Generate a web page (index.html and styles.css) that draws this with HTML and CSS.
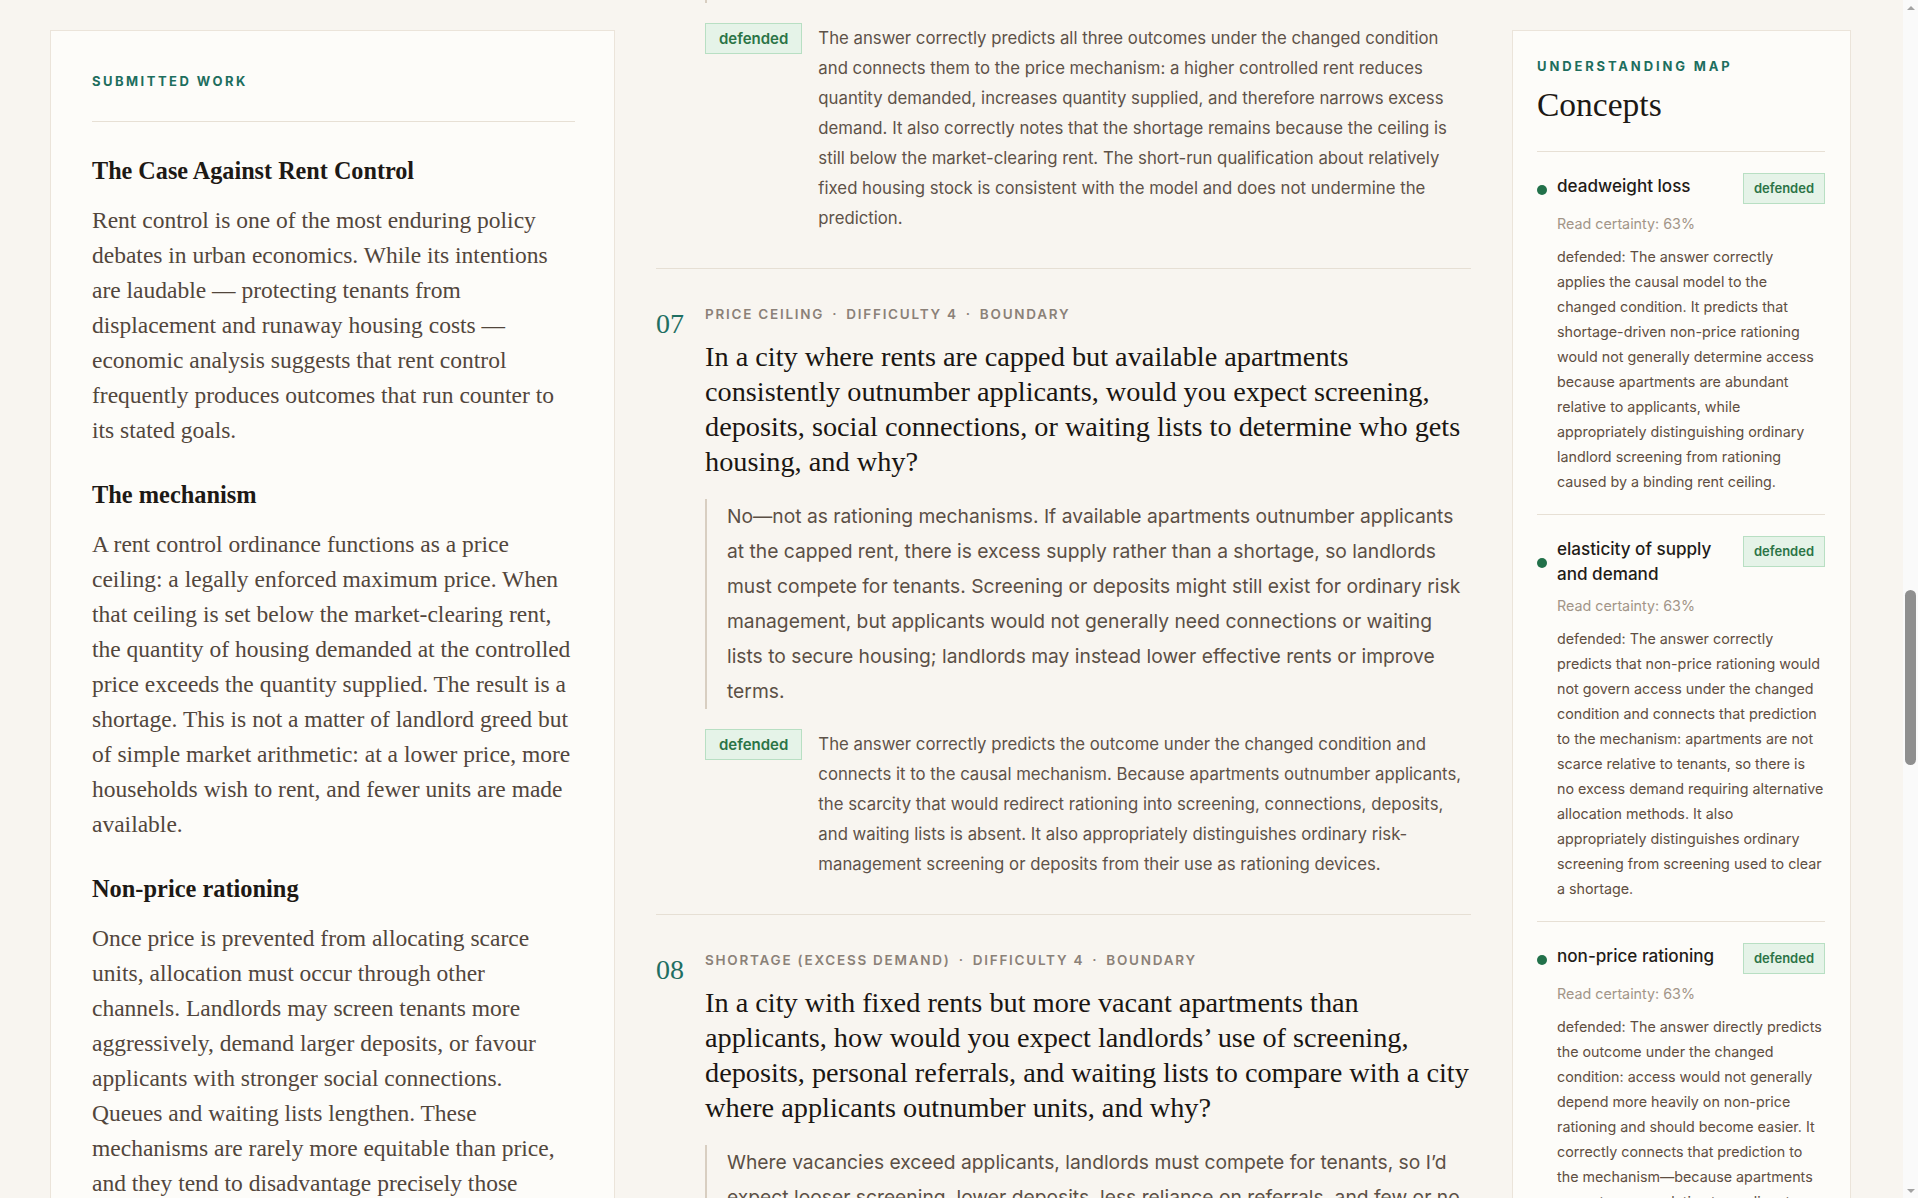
FILE: index.html
```html
<!DOCTYPE html>
<html lang="en">
<head>
    <meta charset="UTF-8">
    <meta name="viewport" content="width=device-width, initial-scale=1.0">
    <title>Review — The Case Against Rent Control</title>
    <link rel="stylesheet" href="styles.css">
</head>
<body>
    <div class="shell">
    <div class="app" id="app">
    <div class="layout">

        <!-- Submitted essay, kept in view while scrolling the questions -->
        <aside class="panel submission">
            <div class="panel-label submission-label">Submitted work</div>
            <article class="essay">
                <h2>The Case Against Rent Control</h2>
                <p>Rent control is one of the most enduring policy debates in urban economics. While its intentions are laudable — protecting tenants from displacement and runaway housing costs — economic analysis suggests that rent control frequently produces outcomes that run counter to its stated goals.</p>

                <h3>The mechanism</h3>
                <p>A rent control ordinance functions as a price ceiling: a legally enforced maximum price. When that ceiling is set below the market-clearing rent, the quantity of housing demanded at the controlled price exceeds the quantity supplied. The result is a shortage. This is not a matter of landlord greed but of simple market arithmetic: at a lower price, more households wish to rent, and fewer units are made available.</p>

                <h3>Non-price rationing</h3>
                <p>Once price is prevented from allocating scarce units, allocation must occur through other channels. Landlords may screen tenants more aggressively, demand larger deposits, or favour applicants with stronger social connections. Queues and waiting lists lengthen. These mechanisms are rarely more equitable than price, and they tend to disadvantage precisely those households that rent control was meant to protect: newcomers, younger renters, and people without savings or references.</p>

                <h3>The long run</h3>
                <p>Because the controlled rent caps the return on rental housing, owners have less reason to maintain existing units or to build new ones. Some convert apartments to condominiums or take them off the market entirely. Over time the rental stock shrinks and ages, deepening the very shortage the ceiling created.</p>

                <h3>Conclusion</h3>
                <p>Rent control helps the tenants who already hold controlled leases, but it does so at the expense of those still searching, and of the housing stock itself. Policies that expand supply or support low-income renters directly are more likely to achieve what rent control promises.</p>
            </article>
        </aside>

        <main class="questions" id="questions">
            <header class="review-head">
                <div class="panel-label">Comprehension check</div>
                <h1>Does the essay’s causal model hold up?</h1>
                <p>Twelve questions move the conditions of the essay’s argument and ask what should happen next. Each answer is read against the model and marked defended, partial or not yet shown. Boundary questions push the model to the edge of where it applies.</p>
                <div class="review-stats">
                    <div class="stat"><span class="stat-value">12</span><span class="stat-label">Questions</span></div>
                    <div class="stat"><span class="stat-value">12</span><span class="stat-label">Defended</span></div>
                    <div class="stat"><span class="stat-value">0</span><span class="stat-label">Partial</span></div>
                    <div class="stat"><span class="stat-value">5</span><span class="stat-label">Concepts</span></div>
                </div>
            </header>
            <!-- Questions are appended from the data below -->
        </main>

        <!-- Concept map for the whole review -->
        <aside class="panel concepts">
            <div class="panel-label">Understanding map</div>
            <h2 class="concepts-title">Concepts</h2>
            <ul class="concept-list">
                <li class="concept">
                    <div class="concept-head">
                        <span class="concept-dot"></span>
                        <span class="concept-name">deadweight loss</span>
                        <span class="badge badge-sm">defended</span>
                    </div>
                    <div class="concept-certainty">Read certainty: 63%</div>
                    <p class="concept-note">defended: The answer correctly applies the causal model to the changed condition. It predicts that shortage-driven non-price rationing would not generally determine access because apartments are abundant relative to applicants, while appropriately distinguishing ordinary landlord screening from rationing caused by a binding rent ceiling.</p>
                </li>
                <li class="concept">
                    <div class="concept-head">
                        <span class="concept-dot"></span>
                        <span class="concept-name">elasticity of supply and demand</span>
                        <span class="badge badge-sm">defended</span>
                    </div>
                    <div class="concept-certainty">Read certainty: 63%</div>
                    <p class="concept-note">defended: The answer correctly predicts that non-price rationing would not govern access under the changed condition and connects that prediction to the mechanism: apartments are not scarce relative to tenants, so there is no excess demand requiring alternative allocation methods. It also appropriately distinguishes ordinary screening from screening used to clear a shortage.</p>
                </li>
                <li class="concept">
                    <div class="concept-head">
                        <span class="concept-dot"></span>
                        <span class="concept-name">non-price rationing</span>
                        <span class="badge badge-sm">defended</span>
                    </div>
                    <div class="concept-certainty">Read certainty: 63%</div>
                    <p class="concept-note">defended: The answer directly predicts the outcome under the changed condition: access would not generally depend more heavily on non-price rationing and should become easier. It correctly connects that prediction to the mechanism—because apartments are not scarce relative to applicants, landlords have no surplus of tenants to ration among.</p>
                </li>
                <li class="concept">
                    <div class="concept-head">
                        <span class="concept-dot"></span>
                        <span class="concept-name">price ceiling</span>
                        <span class="badge badge-sm">defended</span>
                    </div>
                    <div class="concept-certainty">Read certainty: 71%</div>
                    <p class="concept-note">defended: The answer correctly predicts that raising the ceiling while keeping it below the market-clearing rent narrows but does not remove the shortage, and ties each change to movements along the supply and demand curves.</p>
                </li>
                <li class="concept">
                    <div class="concept-head">
                        <span class="concept-dot"></span>
                        <span class="concept-name">shortage (excess demand)</span>
                        <span class="badge badge-sm">defended</span>
                    </div>
                    <div class="concept-certainty">Read certainty: 68%</div>
                    <p class="concept-note">defended: The answer correctly compares allocation in a market with excess demand and one with excess supply, and explains that screening and queues respond to the shortage rather than to the ceiling itself.</p>
                </li>
            </ul>
        </aside>
    </div>
    </div>

    <!-- Slim scroll rail for the review pane -->
    <div class="scroll-track">
        <span class="scroll-arrow up"></span>
        <div class="scroll-rail" id="scrollRail">
            <div class="scroll-thumb" id="scrollThumb"></div>
        </div>
        <span class="scroll-arrow down"></span>
    </div>
    </div>

    <script>
        const questions = [
            {
                num: '01', topic: 'Price ceiling', difficulty: 2, kind: 'Core',
                question: 'A city caps monthly rent for one-bedroom apartments below the rent at which the market would otherwise clear. What happens to the quantity of apartments demanded and supplied?',
                answer: 'At the capped rent more households want to rent, so quantity demanded rises, while fewer units are offered because renting them out pays less, so quantity supplied falls. The gap between the two is a shortage of apartments. Landlords who stay in the market also have less reason to add units, so the shortage can grow over time even if demand does not change.',
                verdict: 'defended',
                feedback: 'The answer correctly identifies a movement along both curves rather than a shift of either, and names the resulting gap as a shortage. It ties each change to the incentive facing renters and landlords instead of restating the definition of a price ceiling. The explanation also anticipates the longer-run supply response without confusing it with the immediate effect, and keeps the distinction between quantity demanded and demand clear throughout.'
            },
            {
                num: '02', topic: 'Shortage (excess demand)', difficulty: 2, kind: 'Core',
                question: 'Why does a binding rent ceiling produce a persistent shortage instead of simply making housing cheaper for everyone who wants it?',
                answer: 'Because the ceiling stops the rent from rising to the level where quantity demanded equals quantity supplied. Normally a shortage pushes prices up until it disappears, but the legal maximum blocks that adjustment, so the excess demand stays in place for as long as the ceiling binds. People who already hold leases benefit, but those still searching face longer queues and must compete in ways that do not show up in the rent.',
                verdict: 'defended',
                feedback: 'The answer correctly explains that the shortage persists because the adjustment mechanism is suppressed, not because demand is unusually high. It distinguishes a lower price for those who find a unit from lower costs for everyone who is searching. It also recognises that the benefit of the lower rent is unevenly spread, which sets up the later questions about how access is decided when price cannot do it.'
            },
            {
                num: '03', topic: 'Non-price rationing', difficulty: 3, kind: 'Transfer',
                question: 'Under a binding rent ceiling, landlords receive far more applications than they have units. What criteria would you expect them to use to choose tenants, and who is likely to lose out?',
                answer: 'Since they cannot charge more, landlords will choose using other things: credit checks, references, larger deposits, referrals from people they know, or simply whoever applied first. Newcomers, younger renters and people without savings or connections are the most likely to be shut out. Because each of these criteria costs applicants time, money or social capital, the true cost of getting an apartment ends up higher than the controlled rent suggests.',
                verdict: 'defended',
                feedback: 'The answer correctly predicts that allocation shifts from price to screening, deposits, connections, and queues, and identifies the groups that these devices tend to exclude. It connects the change directly to the excess demand created by the ceiling. The point about the hidden cost of access is a good extension: rationing by other means still imposes a price, only one paid in effort, delay and connections instead of rent.'
            },
            {
                num: '04', topic: 'Deadweight loss', difficulty: 3, kind: 'Core',
                question: 'Rent control transfers some surplus from landlords to tenants. Why does economic analysis also predict a loss of total surplus, and where does that loss come from?',
                answer: 'Fewer apartments are rented than at the market-clearing rent. For the units that are no longer supplied, some renters valued them above what it would have cost to provide them, so mutually beneficial rentals never happen. That lost surplus is the deadweight loss, separate from the transfer. Some of what landlords lose becomes a gain for tenants, but the value of the apartments that are never rented is lost to everyone.',
                verdict: 'defended',
                feedback: 'The answer correctly separates the transfer of surplus from the net loss and locates the deadweight loss in the units that are no longer traded. It explains the loss in terms of trades that would have benefited both sides rather than as a fall in landlord income. It could note that non-price rationing adds to the loss when units go to renters who value them less, but the core reasoning is sound.'
            },
            {
                num: '05', topic: 'Elasticity of supply and demand', difficulty: 3, kind: 'Transfer',
                question: 'Would you expect the shortage caused by a rent ceiling to be larger one year after it is introduced or ten years after, and why?',
                answer: 'Larger after ten years. In the short run the housing stock is mostly fixed, so supply barely responds. Over time owners convert units, defer maintenance and build less, and more people move to the city looking for cheap rent, so both supply and demand become more elastic and the gap widens. In the first year the shortage mainly reflects demand, while later it also reflects the units that were never built.',
                verdict: 'defended',
                feedback: 'The answer correctly predicts a growing shortage and connects it to the difference between short-run and long-run elasticity on both sides of the market. It recognises that the same ceiling produces a larger gap as supply and demand become more responsive. The distinction between the first-year gap and the later gap, which also reflects units never built, is clearly drawn and matches the causal model in the essay.'
            },
            {
                num: '06', topic: 'Price ceiling', difficulty: 4, kind: 'Boundary',
                question: 'Suppose the city raises the rent ceiling but leaves it below the market-clearing rent. What would you expect to happen to quantity demanded, quantity supplied, and the shortage?',
                answer: 'A higher controlled rent means slightly fewer households want to rent and landlords are willing to offer a few more units, so the shortage narrows. It does not disappear, because the ceiling is still below the market-clearing rent. In the short run supply might barely move, since the housing stock is relatively fixed. Over several years the higher ceiling would let supply respond more, so the gap would keep closing slowly.',
                verdict: 'defended',
                feedback: 'The answer correctly predicts all three outcomes under the changed condition and connects them to the price mechanism: a higher controlled rent reduces quantity demanded, increases quantity supplied, and therefore narrows excess demand. It also correctly notes that the shortage remains because the ceiling is still below the market-clearing rent. The short-run qualification about relatively fixed housing stock is consistent with the model and does not undermine the prediction.'
            },
            {
                num: '07', topic: 'Price ceiling', difficulty: 4, kind: 'Boundary',
                question: 'In a city where rents are capped but available apartments consistently outnumber applicants, would you expect screening, deposits, social connections, or waiting lists to determine who gets housing, and why?',
                answer: 'No—not as rationing mechanisms. If available apartments outnumber applicants at the capped rent, there is excess supply rather than a shortage, so landlords must compete for tenants. Screening or deposits might still exist for ordinary risk management, but applicants would not generally need connections or waiting lists to secure housing; landlords may instead lower effective rents or improve terms.',
                verdict: 'defended',
                feedback: 'The answer correctly predicts the outcome under the changed condition and connects it to the causal mechanism. Because apartments outnumber applicants, the scarcity that would redirect rationing into screening, connections, deposits, and waiting lists is absent. It also appropriately distinguishes ordinary risk-management screening or deposits from their use as rationing devices.'
            },
            {
                num: '08', topic: 'Shortage (excess demand)', difficulty: 4, kind: 'Boundary',
                question: 'In a city with fixed rents but more vacant apartments than applicants, how would you expect landlords’ use of screening, deposits, personal referrals, and waiting lists to compare with a city where applicants outnumber units, and why?',
                answer: 'Where vacancies exceed applicants, landlords must compete for tenants, so I’d expect looser screening, lower deposits, less reliance on referrals, and few or no waiting lists. Where applicants outnumber units, the shortage lets landlords choose among many applicants, so those same devices become the way scarce apartments are allocated.',
                verdict: 'defended',
                feedback: 'The answer correctly predicts that screening, deposits, referrals, and waiting lists matter less where vacancies exceed applicants, and ties the comparison to whether excess demand exists. It recognises that these devices respond to the shortage rather than to the rent cap itself.'
            },
            {
                num: '09', topic: 'Deadweight loss', difficulty: 4, kind: 'Boundary',
                question: 'If the rent ceiling were set above the market-clearing rent, would it create any deadweight loss? Explain using the same reasoning you applied to a binding ceiling.',
                answer: 'No. A ceiling above the equilibrium rent does not bind, so the market still clears at the equilibrium rent and the same number of apartments is rented. No mutually beneficial rentals are blocked, so there is no deadweight loss, although the ceiling could start to bind if demand later rose. Until then it only works as a safeguard against future rent rises.',
                verdict: 'defended',
                feedback: 'The answer correctly identifies the ceiling as non-binding and applies the causal model consistently: with no reduction in quantity traded there are no lost trades and therefore no deadweight loss. The note about future demand shows a sound grasp of when the ceiling becomes relevant. It also avoids the common error of assuming that any legal price limit must distort the market.'
            },
            {
                num: '10', topic: 'Elasticity of supply and demand', difficulty: 4, kind: 'Transfer',
                question: 'Two cities impose identical rent ceilings. In one, new housing can be built quickly on cheap land; in the other, building is slow and heavily restricted. Where would the ceiling reduce housing supply more, and why?',
                answer: 'In the city where building is quick and cheap. There supply is more elastic, so when the ceiling lowers the return on renting, developers respond by building much less. Where supply is already restricted, quantity supplied was not very responsive to price in the first place, so the ceiling changes it less. Over time the gap between the two cities would widen as construction in the first one slows.',
                verdict: 'defended',
                feedback: 'The answer correctly links the size of the supply response to the elasticity of supply and applies it to both cities. It recognises that the more responsive market loses more new construction, even though the ceiling is the same. It also correctly notes that the effect builds over time rather than appearing all at once.'
            },
            {
                num: '11', topic: 'Non-price rationing', difficulty: 5, kind: 'Boundary',
                question: 'A city bans landlords from charging deposits or running credit checks while keeping a binding rent ceiling. Would this eliminate non-price rationing? What would you expect to happen instead?',
                answer: 'No. The shortage is still there, so landlords still have to pick among too many applicants. If deposits and credit checks are banned they will lean on other criteria, such as personal referrals, informal side payments, or simply first come, first served, and waiting lists will grow. Applicants without connections would be no better off than before.',
                verdict: 'defended',
                feedback: 'The answer correctly predicts that banning particular screening devices does not remove the underlying excess demand, so rationing shifts to the remaining channels. It connects the prediction to the mechanism rather than treating the ban as a solution. The observation about informal side payments shows a clear grasp of how rationing adapts when formal channels are closed.'
            },
            {
                num: '12', topic: 'Price ceiling', difficulty: 5, kind: 'Boundary',
                question: 'If a city paired its rent ceiling with a subsidy paying landlords the difference between the controlled rent and the market rent, how would the shortage change?',
                answer: 'Supply would behave as if there were no ceiling, because landlords receive the market rent in total. Tenants still face the lower rent, though, so quantity demanded stays high. Supply rises back toward its market level and the shortage narrows, but some excess demand remains at the controlled rent. The subsidy also has to be paid for, which moves part of the cost from landlords to taxpayers.',
                verdict: 'defended',
                feedback: 'The answer correctly separates the price tenants pay from the price landlords receive and traces each to its side of the market. It predicts a narrower but persistent shortage, which follows from the model. The point about who pays for the subsidy is a useful extension beyond the model.'
            }
        ];

        const list = document.getElementById('questions');

        questions.forEach(q => {
            const item = document.createElement('section');
            item.className = 'item';
            item.dataset.num = q.num;
            item.innerHTML = `
                <div class="item-num">${q.num}</div>
                <div class="item-body">
                    <div class="item-meta">${q.topic}<span class="sep">·</span>Difficulty ${q.difficulty}<span class="sep">·</span>${q.kind}</div>
                    <h3 class="item-question">${q.question}</h3>
                    <blockquote class="item-answer">${q.answer}</blockquote>
                    <div class="item-verdict">
                        <span class="badge">${q.verdict}</span>
                        <p class="item-feedback">${q.feedback}</p>
                    </div>
                </div>
            `;
            list.appendChild(item);
        });

        // Closing note under the last question
        const footer = document.createElement('footer');
        footer.className = 'review-foot';
        footer.innerHTML = `
            <div class="panel-label">End of review</div>
            <p>All ${questions.length} answers were defended against the essay’s causal model. Reopen any question to see the full reading behind its verdict.</p>
        `;
        list.appendChild(footer);

        const app = document.getElementById('app');
        const rail = document.getElementById('scrollRail');
        const thumb = document.getElementById('scrollThumb');

        // Keep the rail thumb in step with the pane
        function syncThumb() {
            const track = rail.clientHeight;
            const size = Math.max(24, track * app.clientHeight / app.scrollHeight);
            const range = app.scrollHeight - app.clientHeight;
            const top = range > 0 ? (track - size) * app.scrollTop / range : 0;
            thumb.style.height = size + 'px';
            thumb.style.marginTop = top + 'px';
        }

        const resumeAt = document.querySelector('.item[data-num="06"] .item-verdict');

        function restoreScroll() {
            const offset = resumeAt.getBoundingClientRect().top - app.getBoundingClientRect().top;
            app.scrollTop = app.scrollTop + offset - 23;
            syncThumb();
        }

        app.addEventListener('scroll', syncThumb);
        restoreScroll();
        window.addEventListener('load', restoreScroll);
    </script>
</body>
</html>
```

FILE: styles.css
```css
* {
    box-sizing: border-box;
}

html,
body {
    height: 100%;
    overflow: hidden;
}

body {
    margin: 0;
    background: #f8f5f0;
    color: #1f1b17;
    font-family: Inter, "Liberation Sans", sans-serif;
}

/* The review pane scrolls; the side panels stick inside it */
.shell {
    display: flex;
    height: 100vh;
}

.app {
    flex: 1;
    height: 100vh;
    overflow-y: auto;
    scrollbar-width: none;
}

.app::-webkit-scrollbar {
    display: none;
}

.scroll-track {
    display: flex;
    flex-direction: column;
    width: 15px;
    flex-shrink: 0;
    background: #fafafa;
}

.scroll-arrow {
    display: flex;
    align-items: center;
    justify-content: center;
    height: 15px;
}

.scroll-arrow::before {
    content: "";
    border-left: 4px solid transparent;
    border-right: 4px solid transparent;
}

.scroll-arrow.up::before {
    border-bottom: 4px solid #a3a3a3;
}

.scroll-arrow.down::before {
    border-top: 4px solid #a3a3a3;
}

.scroll-rail {
    flex: 1;
    padding: 0 2px;
}

.scroll-thumb {
    background: #8f8f8f;
    border-radius: 6px;
}

.layout {
    display: grid;
    grid-template-columns: 565px 815px 339px;
    column-gap: 41px;
    align-items: start;
    padding: 30px 0 30px 50px;
}

/* Side panels */

.panel {
    position: sticky;
    top: 30px;
    background: #fdfcf9;
    border: 1px solid #ebe4da;
}

.panel-label {
    font-size: 13px;
    font-weight: 700;
    line-height: 18px;
    letter-spacing: 0.19em;
    text-transform: uppercase;
    color: #1d6e5e;
}

.submission {
    padding: 41px 39px 41px 41px;
}

.submission-label {
    padding-bottom: 31px;
    border-bottom: 1px solid #e7e0d5;
}

.essay h2,
.essay h3 {
    font-family: "Liberation Serif", serif;
    font-size: 24.4px;
    font-weight: 700;
    line-height: 31px;
    color: #1d1915;
    margin: 31px 0 17px 0;
}

.essay h2 {
    margin-top: 33px;
    font-size: 24.2px;
}

.essay p {
    font-family: "Liberation Serif", serif;
    font-size: 23.5px;
    line-height: 35px;
    color: #52463c;
    margin: 0;
}

/* Review header and footer around the questions */

.review-head {
    padding: 42px 0 48px 49px;
    border-bottom: 1px solid #e6dfd4;
}

.review-head h1 {
    margin: 14px 0 0 0;
    font-family: "Liberation Serif", serif;
    font-size: 40px;
    font-weight: 400;
    line-height: 48px;
    color: #1d1915;
}

.review-head p {
    margin: 16px 0 0 0;
    font-size: 19px;
    line-height: 33px;
    color: #5b4f45;
}

.review-stats {
    display: grid;
    grid-template-columns: repeat(4, 1fr);
    gap: 16px;
    margin-top: 28px;
}

.stat {
    display: flex;
    flex-direction: column;
    gap: 6px;
    padding: 16px 20px;
    background: #fdfcf9;
    border: 1px solid #ebe4da;
}

.stat-value {
    font-family: "Liberation Serif", serif;
    font-size: 32px;
    line-height: 36px;
    color: #1f6f62;
}

.stat-label {
    font-size: 12px;
    font-weight: 600;
    letter-spacing: 0.14em;
    text-transform: uppercase;
    color: #8b8178;
}

.review-foot {
    padding: 44px 0 120px 49px;
}

.review-foot p {
    margin: 14px 0 0 0;
    font-size: 17px;
    line-height: 30px;
    color: #5e5248;
}

/* Concept map */

.concepts {
    padding: 26px 25px 24px 24px;
}

.concepts .panel-label {
    letter-spacing: 0.22em;
}

.concepts-title {
    font-family: "Liberation Serif", serif;
    font-size: 33.5px;
    font-weight: 400;
    line-height: 40px;
    color: #1d1915;
    margin: 10px 0 0 0;
    padding-bottom: 26px;
    border-bottom: 1px solid #e7e0d5;
}

.concept-list {
    list-style: none;
    margin: 0;
    padding: 0;
}

.concept {
    padding: 21px 0 20px 0;
    border-bottom: 1px solid #e7e0d5;
}

.concept-head {
    display: flex;
    align-items: flex-start;
}

.concept-dot {
    align-self: center;
    flex-shrink: 0;
    width: 10px;
    height: 10px;
    margin: 3px 10px 0 0;
    border-radius: 50%;
    background: #22714a;
}

.concept-name {
    flex: 1;
    font-size: 17.1px;
    font-weight: 500;
    line-height: 25px;
    color: #1f1b17;
    margin-right: 16px;
}

.concept-certainty {
    margin-top: 7px;
    padding-left: 20px;
    font-size: 14.3px;
    line-height: 25px;
    color: #a29588;
}

.concept-note {
    margin: 8px 0 0 0;
    padding-left: 20px;
    font-size: 14.3px;
    line-height: 25px;
    color: #5f4e41;
}

/* Badges */

.badge {
    display: inline-block;
    flex-shrink: 0;
    padding: 0 13px;
    font-size: 15px;
    font-weight: 600;
    line-height: 29px;
    color: #2b7446;
    background: #e5f3e8;
    border: 1px solid #b8dfc3;
}

.badge-sm {
    padding: 0 10px;
    font-size: 13px;
}

/* Question list */

.item {
    display: grid;
    grid-template-columns: 49px minmax(0, 1fr);
    padding: 36px 0 35px 0;
    border-bottom: 1px solid #e6dfd4;
}

.item-num {
    padding-top: 5px;
    font-family: "Liberation Serif", serif;
    font-size: 28px;
    line-height: 27px;
    color: #1f6f62;
}

.item-meta {
    font-size: 13.5px;
    font-weight: 600;
    line-height: 18px;
    letter-spacing: 0.13em;
    text-transform: uppercase;
    color: #8b8178;
}

.item-meta .sep {
    margin: 0 8px;
}

.item-question {
    margin: 16px 0 0 0;
    font-family: "Liberation Serif", serif;
    font-size: 28.3px;
    font-weight: 400;
    line-height: 35px;
    color: #1a1612;
}

.item-answer {
    margin: 20px 0 0 0;
    padding-left: 20px;
    border-left: 2px solid #d8cec1;
    font-size: 19.25px;
    line-height: 35px;
    color: #5b4f45;
}

.item-verdict {
    display: flex;
    align-items: flex-start;
    gap: 16px;
    margin-top: 20px;
}

.item-feedback {
    margin: 0;
    font-size: 16.75px;
    line-height: 30px;
    color: #5e5248;
}
```
